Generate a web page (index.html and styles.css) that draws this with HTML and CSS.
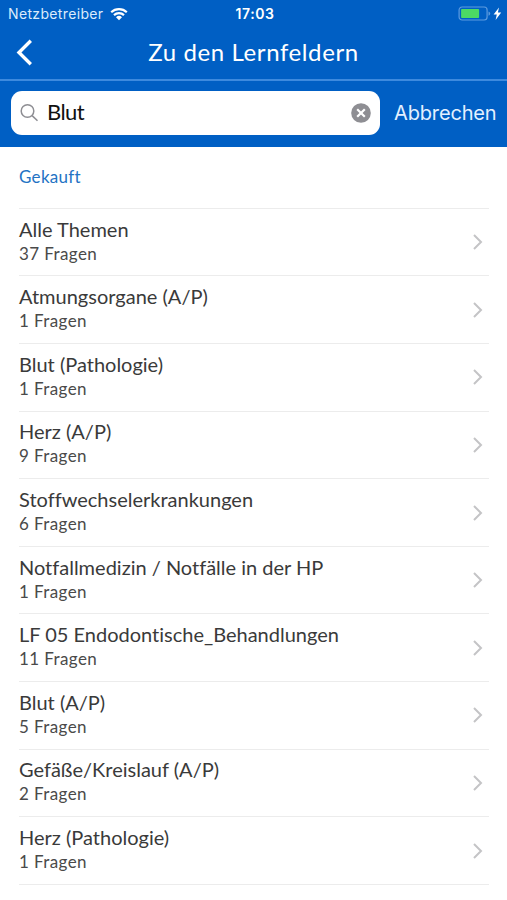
FILE: index.html
```
<!DOCTYPE html>
<html lang="de">

<head>
    <meta charset="utf-8">
    <title>Zu den Lernfeldern</title>
    <link rel="stylesheet" href="styles.css">
</head>

<body>
    <header class="header">
        <div class="status">
            <div class="carrier">
                <span>Netzbetreiber</span>
                <svg class="wifi" width="18" height="14" viewBox="0 0 18 14">
                    <path d="M1.2 5.2a11.2 11.2 0 0 1 15.6 0M4 8.1a7.2 7.2 0 0 1 10 0" />
                    <path class="dot" d="M6 10.2a4.4 4.4 0 0 1 6 0L9 13.2z" />
                </svg>
            </div>
            <span class="time">17:03</span>
            <svg class="battery" width="43" height="16" viewBox="0 0 43 16">
                <rect class="shell" x="0.1" y="1" width="28" height="13" rx="3" />
                <rect class="level" x="2.1" y="3" width="18" height="9" rx="0.8" />
                <path class="cap" d="M29.5 5.4q1.7.5 1.7 2.2t-1.7 2.2z" />
                <path class="bolt" d="M40 1.5l-5.4 7h3.2L36.6 14l5.6-7.5h-3.3z" />
            </svg>
        </div>
        <div class="nav">
            <svg class="back" width="18" height="28" viewBox="0 0 18 28">
                <path d="M15.8 2.8L4 14.5l11.8 11.7" />
            </svg>
            <h1>Zu den Lernfeldern</h1>
        </div>
        <div class="search">
            <div class="field">
                <svg class="glass" width="20" height="20" viewBox="0 0 20 20">
                    <circle cx="7.5" cy="8" r="6.3" />
                    <path d="M12.1 12.6l5.4 5.2" />
                </svg>
                <span class="query">Blut</span>
                <svg class="clear" width="20" height="20" viewBox="0 0 20 20">
                    <circle cx="10" cy="10" r="9.8" />
                    <path d="M6.2 6.2l7.6 7.6M13.8 6.2l-7.6 7.6" />
                </svg>
            </div>
            <span class="cancel">Abbrechen</span>
        </div>
    </header>

    <main class="content">
        <h2>Gekauft</h2>
        <ul class="list">
            <li>
                <div><p class="title">Alle Themen</p><p class="count">37 Fragen</p></div>
                <svg class="arrow" width="12" height="18" viewBox="0 0 12 18"><path d="M2 2l7 7-7 7" /></svg>
            </li>
            <li>
                <div><p class="title">Atmungsorgane (A/P)</p><p class="count">1 Fragen</p></div>
                <svg class="arrow" width="12" height="18" viewBox="0 0 12 18"><path d="M2 2l7 7-7 7" /></svg>
            </li>
            <li>
                <div><p class="title">Blut (Pathologie)</p><p class="count">1 Fragen</p></div>
                <svg class="arrow" width="12" height="18" viewBox="0 0 12 18"><path d="M2 2l7 7-7 7" /></svg>
            </li>
            <li>
                <div><p class="title">Herz (A/P)</p><p class="count">9 Fragen</p></div>
                <svg class="arrow" width="12" height="18" viewBox="0 0 12 18"><path d="M2 2l7 7-7 7" /></svg>
            </li>
            <li>
                <div><p class="title">Stoffwechselerkrankungen</p><p class="count">6 Fragen</p></div>
                <svg class="arrow" width="12" height="18" viewBox="0 0 12 18"><path d="M2 2l7 7-7 7" /></svg>
            </li>
            <li>
                <div><p class="title">Notfallmedizin / Notfälle in der HP</p><p class="count">1 Fragen</p></div>
                <svg class="arrow" width="12" height="18" viewBox="0 0 12 18"><path d="M2 2l7 7-7 7" /></svg>
            </li>
            <li>
                <div><p class="title">LF 05 Endodontische_Behandlungen</p><p class="count">11 Fragen</p></div>
                <svg class="arrow" width="12" height="18" viewBox="0 0 12 18"><path d="M2 2l7 7-7 7" /></svg>
            </li>
            <li>
                <div><p class="title">Blut (A/P)</p><p class="count">5 Fragen</p></div>
                <svg class="arrow" width="12" height="18" viewBox="0 0 12 18"><path d="M2 2l7 7-7 7" /></svg>
            </li>
            <li>
                <div><p class="title">Gefäße/Kreislauf (A/P)</p><p class="count">2 Fragen</p></div>
                <svg class="arrow" width="12" height="18" viewBox="0 0 12 18"><path d="M2 2l7 7-7 7" /></svg>
            </li>
            <li>
                <div><p class="title">Herz (Pathologie)</p><p class="count">1 Fragen</p></div>
                <svg class="arrow" width="12" height="18" viewBox="0 0 12 18"><path d="M2 2l7 7-7 7" /></svg>
            </li>
        </ul>
    </main>
</body>

</html>
```
FILE: styles.css
```
* {
    box-sizing: border-box;
}

body {
    margin: 0;
    height: 900px;
    overflow: hidden;
    background: #fff;
    color: #3a3a3a;
    font-family: Lato, sans-serif;
    font-variant-ligatures: none;
}

h1, h2, p, ul {
    margin: 0;
    padding: 0;
    font-weight: normal;
}

svg {
    display: block;
    flex: none;
    fill: none;
    overflow: visible;
}

.header {
    height: 147px;
    background: #005fc4;
    color: #fff;
}

.status {
    display: grid;
    grid-template-columns: 1fr auto 1fr;
    align-items: center;
    height: 27px;
    padding: 0 5px 0 8px;
    font-family: Inter, sans-serif;
    font-size: 14px;
}

.carrier {
    display: flex;
    align-items: center;
    gap: 7px;
    color: #dcebfb;
    letter-spacing: 0.35px;
}

.wifi {
    stroke: #fff;
    stroke-width: 2.2;
}

.wifi .dot {
    fill: #fff;
    stroke: none;
}

.time {
    font-weight: 600;
    letter-spacing: 0.6px;
}

.battery {
    justify-self: end;
}

.shell {
    stroke: #5c9bdf;
    stroke-width: 1.2;
}

.level {
    fill: #4cd964;
}

.cap {
    fill: #5c9bdf;
}

.bolt {
    fill: #fff;
}

.nav {
    display: grid;
    grid-template-columns: 18px 1fr 18px;
    align-items: center;
    height: 54px;
    padding: 0 15px 3px;
    border-bottom: 2px solid #3d8ade;
}

.back path {
    stroke: #fff;
    stroke-width: 3.4;
}

h1 {
    font-size: 24px;
    line-height: 30px;
    text-align: center;
    letter-spacing: 0.6px;
}

.search {
    display: flex;
    align-items: center;
    height: 66px;
    padding: 0 0 2px 11px;
}

.field {
    display: flex;
    flex: none;
    align-items: center;
    width: 369px;
    height: 44px;
    padding: 0 9px;
    border-radius: 11px;
    background: #fff;
}

.glass {
    stroke: #8e8e93;
    stroke-width: 1.5;
}

.query {
    flex: 1;
    margin-left: 7px;
    padding-bottom: 3px;
    color: #111;
    font-size: 22px;
    letter-spacing: -0.6px;
}

.clear circle {
    fill: #8e8e93;
}

.clear path {
    stroke: #fff;
    stroke-width: 2.2;
}

.cancel {
    margin-left: 14px;
    color: #e3f0ff;
    font-family: Inter, sans-serif;
    font-size: 20px;
    letter-spacing: -0.15px;
}

.content {
    padding: 0 18px 0 19px;
}

h2 {
    height: 60.8px;
    padding-top: 19px;
    color: #2373c4;
    font-size: 17px;
    line-height: 22px;
    letter-spacing: 0.3px;
}

.list {
    border-top: 1px solid #ececec;
    list-style: none;
}

.list li {
    display: flex;
    align-items: center;
    justify-content: space-between;
    height: 67.62px;
    padding-right: 5px;
    border-bottom: 1px solid #ececec;
}

.title {
    font-size: 20px;
    line-height: 25px;
    white-space: nowrap;
}

.count {
    padding-bottom: 2px;
    color: #4a4a4a;
    font-size: 17px;
    line-height: 24px;
    letter-spacing: 0.4px;
}

.arrow path {
    stroke: #c4c4c6;
    stroke-width: 2;
}
```
